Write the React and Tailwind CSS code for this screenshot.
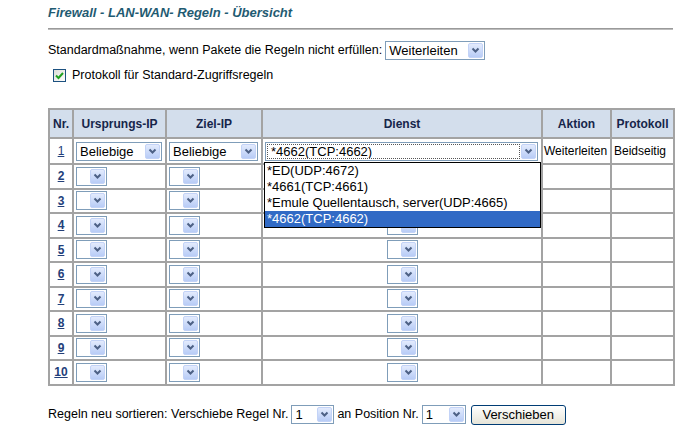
import React from 'react';

const font = { fontFamily: '"Liberation Sans", Arial, sans-serif' };

function Arrow() {
    return (
        <span className="flex h-[15px] w-[15px] shrink-0 items-center justify-center rounded-[2px] border border-[#c3d3f7] bg-gradient-to-b from-[#e3ebfd] to-[#b8ccf6]">
            <svg width="9" height="7" viewBox="0 0 9 7">
                <path d="M1.5 1.5 L4.5 4.5 L7.5 1.5" fill="none" stroke="#4d6185" strokeWidth="2" />
            </svg>
        </span>
    );
}

function Sel({ value, className = '', dotted = false }) {
    return (
        <div className={`flex h-[19px] items-center border border-[#7f9db9] bg-white pr-[1px] ${className}`}>
            <span
                className={`flex h-[15px] flex-1 items-center overflow-hidden whitespace-nowrap px-[3px] text-[13px] leading-none text-black ${
                    dotted ? 'mx-[1px] border border-dotted border-[#555]' : ''
                }`}
            >
                {value}
            </span>
            <Arrow />
        </div>
    );
}

const services = ['*ED(UDP:4672)', '*4661(TCP:4661)', '*Emule Quellentausch, server(UDP:4665)', '*4662(TCP:4662)'];

export default function App() {
    const rows = [2, 3, 4, 5, 6, 7, 8, 9, 10];
    const cell = 'border-2 border-[#a3a3a3] p-0';

    return (
        <div className="h-[431px] w-[682px] overflow-hidden bg-white pl-[48px] text-[12.5px] text-black" style={font}>
            {/* Title */}
            <div className="pt-[5px] text-[13px] font-bold italic leading-[16px] text-[#1f5b72]">
                Firewall - LAN-WAN- Regeln - Übersicht
            </div>
            <div className="mt-[7px] h-[2px] w-[625px] border-t border-[#9a9a9a] border-b-[#d8d8d8] bg-[#bdbdbd]" />

            {/* Default action */}
            <div className="mt-[10px] flex h-[20px] items-center">
                <span className="mr-[3px]">Standardmaßnahme, wenn Pakete die Regeln nicht erfüllen:</span>
                <Sel value="Weiterleiten" className="w-[100px]" />
            </div>
            <div className="mt-[8px] flex h-[14px] items-center pl-[5px]">
                <span className="flex h-[13px] w-[13px] items-center justify-center border border-[#1c5180] bg-gradient-to-br from-[#dcdcd7] to-white">
                    <svg width="9" height="9" viewBox="0 0 9 9">
                        <path d="M1 4.5 L3.5 7 L8 2" fill="none" stroke="#21a121" strokeWidth="2" />
                    </svg>
                </span>
                <span className="ml-[6px]">Protokoll für Standard-Zugriffsregeln</span>
            </div>

            {/* Rules table */}
            <table className="mt-[26px] w-[625px] table-fixed border-collapse border-2 border-[#a3a3a3] text-[12px]">
                <colgroup>
                    <col className="w-[24px]" />
                    <col className="w-[93px]" />
                    <col className="w-[96px]" />
                    <col className="w-[280px]" />
                    <col className="w-[69px]" />
                    <col className="w-[63px]" />
                </colgroup>
                <thead>
                    <tr className="h-[29px] bg-[#d3deec] text-[12px] font-bold text-[#16254a]">
                        <th className={cell}>Nr.</th>
                        <th className={cell}>Ursprungs-IP</th>
                        <th className={cell}>Ziel-IP</th>
                        <th className={cell}>Dienst</th>
                        <th className={cell}>Aktion</th>
                        <th className={cell}>Protokoll</th>
                    </tr>
                </thead>
                <tbody>
                    <tr className="h-[26px]">
                        <td className={`${cell} text-center`}>
                            <span className="text-[#23407a] underline">1</span>
                        </td>
                        <td className={`${cell} px-[2px]`}>
                            <Sel value="Beliebige" className="w-[86px]" />
                        </td>
                        <td className={`${cell} px-[2px]`}>
                            <Sel value="Beliebige" className="w-[89px]" />
                        </td>
                        <td className={`${cell} relative px-[2px]`}>
                            <Sel value="*4662(TCP:4662)" className="w-[273px]" dotted />
                            {/* open list */}
                            <div className="absolute left-[1px] top-[23px] z-10 w-[277px] border border-black bg-white text-[13px] leading-[16px]">
                                {services.map((s, i) => (
                                    <div
                                        key={s}
                                        className={`h-[16px] whitespace-nowrap px-[2px] ${
                                            i === services.length - 1 ? 'bg-[#316ac5] text-white' : 'text-black'
                                        }`}
                                    >
                                        {s}
                                    </div>
                                ))}
                            </div>
                        </td>
                        <td className={`${cell} whitespace-nowrap pl-[1px]`}>Weiterleiten</td>
                        <td className={`${cell} whitespace-nowrap pl-[2px]`}>Beidseitig</td>
                    </tr>
                    {rows.map((n) => (
                        <tr key={n} className="h-[24.5px]">
                            <td className={`${cell} text-center`}>
                                <span className="font-bold text-[#23407a] underline">{n}</span>
                            </td>
                            <td className={`${cell} px-[2px]`}>
                                <Sel value="" className="w-[31px]" />
                            </td>
                            <td className={`${cell} px-[2px]`}>
                                <Sel value="" className="w-[31px]" />
                            </td>
                            <td className={cell}>
                                <div className="flex justify-center">
                                    <Sel value="" className="w-[31px]" />
                                </div>
                            </td>
                            <td className={cell} />
                            <td className={cell} />
                        </tr>
                    ))}
                </tbody>
            </table>

            {/* Reorder */}
            <div className="mt-[19px] flex h-[20px] items-center">
                <span className="mr-[3px]">Regeln neu sortieren: Verschiebe Regel Nr.</span>
                <Sel value="1" className="w-[43px]" />
                <span className="mx-[3px]">an Position Nr.</span>
                <Sel value="1" className="w-[44px]" />
                <button
                    type="button"
                    className="ml-[5px] h-[20px] w-[95px] rounded-[3px] border border-[#003c74] bg-gradient-to-b from-white to-[#e6e4d8] text-[13px] leading-none text-black"
                    style={font}
                >
                    Verschieben
                </button>
            </div>
        </div>
    );
}
